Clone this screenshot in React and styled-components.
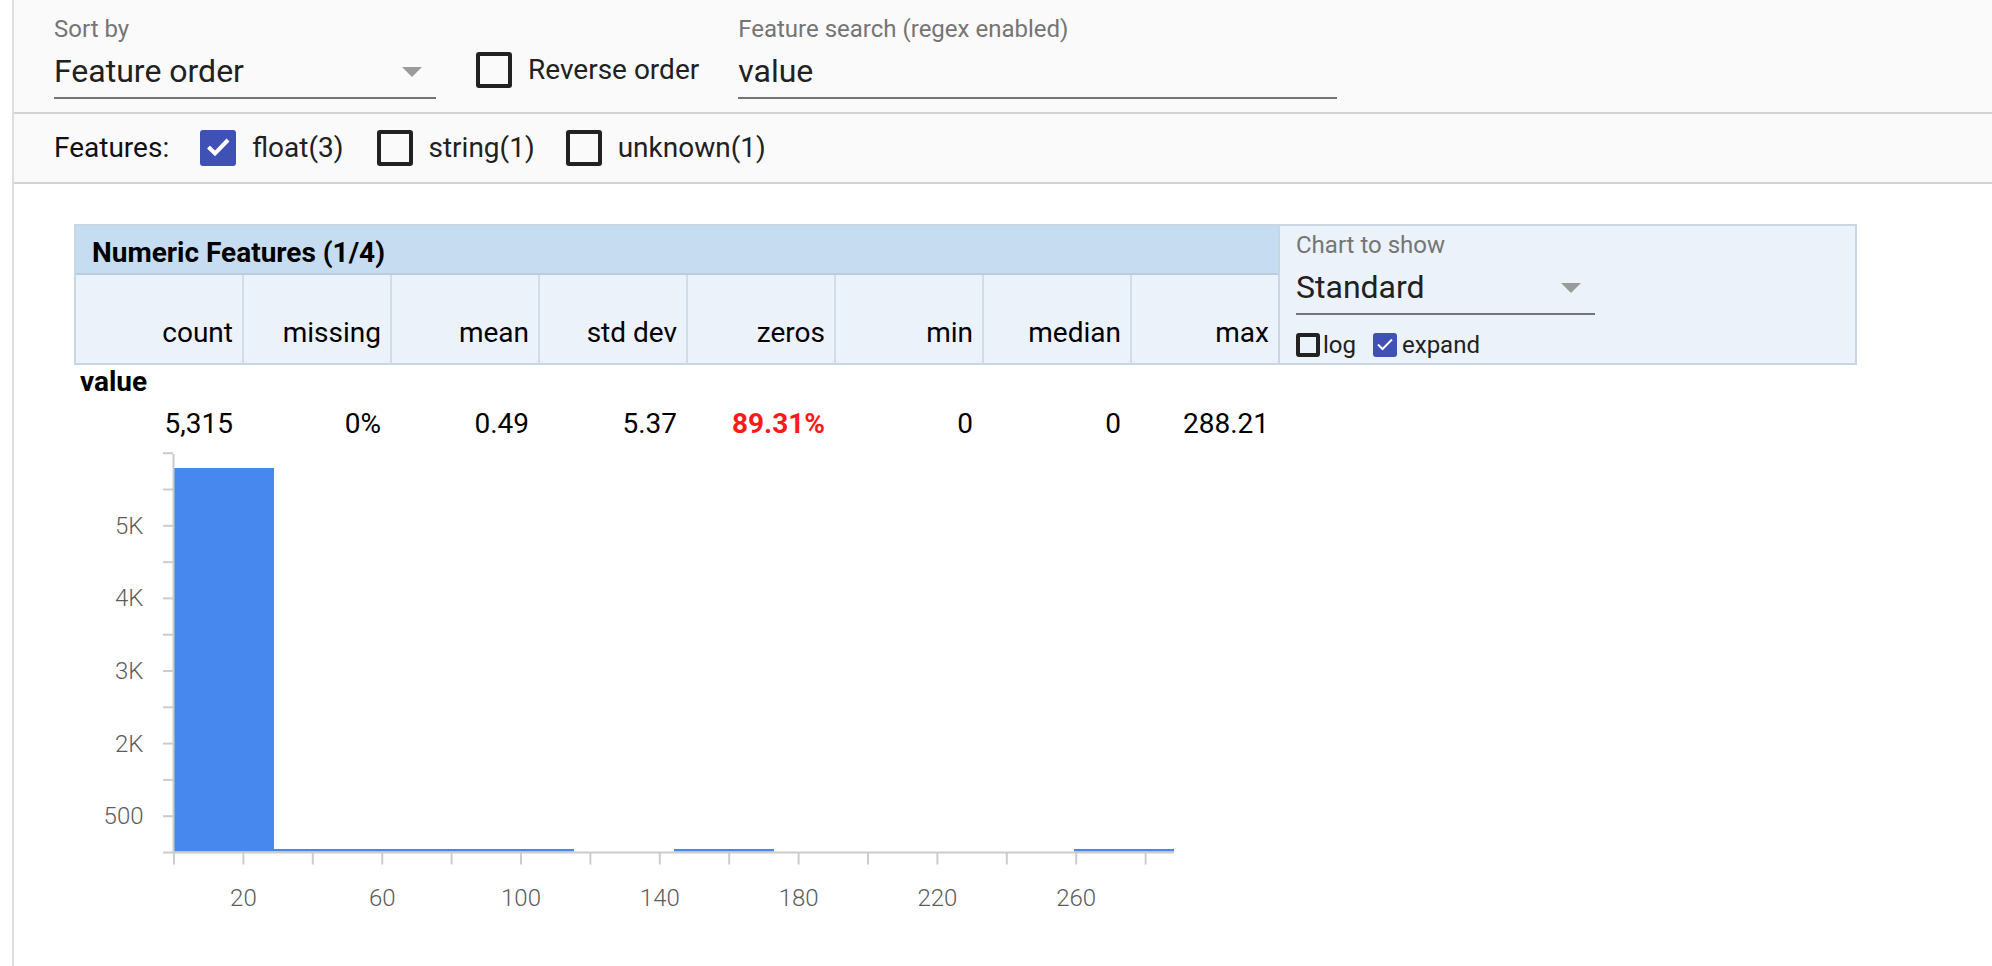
import React from 'react';
import styled, { createGlobalStyle } from 'styled-components';

const GlobalStyle = createGlobalStyle`
  html, body { margin: 0; padding: 0; background: #ffffff; }
  body { font-family: Roboto, "Noto Sans", Arial, sans-serif; color: #212121; }
  *, *::before, *::after { box-sizing: border-box; }
`;

const Page = styled.div`
  margin-left: 12px;
  min-height: 966px;
  border-left: 2px solid #dedede;
`;

const Toolbar = styled.div`
  background: #fafafa;
`;

const ToolbarRow = styled.div`
  display: flex;
  align-items: ${p => p.$align || 'center'};
  height: ${p => p.$height}px;
  padding-left: 40px;
  border-bottom: 2px solid #d2d2d2;
`;

const Field = styled.div`
  flex: none;
  width: ${p => p.$width}px;
  margin-left: ${p => p.$ml || 0}px;
  padding: ${p => p.$top ?? 15}px 0 6px;
  border-bottom: 2px solid #757575;
`;

const FieldLabel = styled.div`
  font-size: 24px;
  line-height: 28px;
  color: #757575;
  white-space: nowrap;
`;

const FieldValue = styled.div`
  display: flex;
  align-items: center;
  justify-content: space-between;
  margin-top: 8px;
  height: 40px;
  font-size: 32px;
  line-height: 40px;
  color: #212121;
  white-space: nowrap;
`;

const DropArrow = styled.svg`
  flex: none;
  width: 20px;
  height: 10px;
  margin-right: 14px;
  margin-top: 2px;
`;

const CheckItem = styled.label`
  flex: none;
  display: flex;
  align-items: center;
  gap: ${p => p.$gap}px;
  margin-left: ${p => p.$ml || 0}px;
  margin-top: ${p => p.$mt || 0}px;
  font-size: ${p => p.$fs}px;
  line-height: ${p => p.$lh}px;
  color: #212121;
  white-space: nowrap;
`;

const Box = styled.span`
  flex: none;
  display: block;
  width: ${p => p.$size}px;
  height: ${p => p.$size}px;
  border-radius: ${p => p.$radius}px;
  border: ${p => (p.$checked ? 'none' : `${p.$border}px solid #222222`)};
  background: ${p => (p.$checked ? '#3f51b5' : 'transparent')};
`;

const BoxMark = styled.svg`
  display: block;
  width: 100%;
  height: 100%;
`;

const RowLabel = styled.span`
  font-size: 28px;
  line-height: 36px;
  color: #111111;
  white-space: nowrap;
`;

const Section = styled.div`
  margin: 40px 0 0 60px;
  width: 1783px;
`;

const StatsTable = styled.div`
  display: grid;
  grid-template-columns: 166px repeat(7, 148px) 577px;
  grid-template-rows: 49px 88px;
  border: 2px solid #c9d6e4;
`;

const TableHeader = styled.div`
  grid-column: 1 / 9;
  grid-row: 1;
  background: #c6dcf0;
  border-bottom: 2px solid #b9cde2;
  padding: 11px 0 0 16px;
  font-size: 28px;
  line-height: 32px;
  font-weight: 700;
  color: #000000;
  white-space: nowrap;
`;

const ColHead = styled.div`
  grid-row: 2;
  display: flex;
  justify-content: flex-end;
  align-items: flex-end;
  padding: 0 9px 14px 0;
  background: #ebf2fa;
  border-left: ${p => (p.$first ? 'none' : '2px solid #d2dce7')};
  font-size: 28px;
  line-height: 32px;
  color: #000000;
  white-space: nowrap;
`;

const ChartPanel = styled.div`
  grid-column: 9;
  grid-row: 1 / 3;
  background: #ebf2fa;
  border-left: 2px solid #c9d6e4;
  padding: 5px 0 0 16px;
`;

const ToggleRow = styled.div`
  display: flex;
  align-items: center;
  margin-top: 16px;
`;

const FeatureName = styled.div`
  margin: 1px 0 0 6px;
  font-size: 28px;
  line-height: 32px;
  font-weight: 700;
  color: #000000;
`;

const ValuesRow = styled.div`
  display: grid;
  grid-template-columns: 166px repeat(7, 148px);
  margin: 10px 0 0 2px;
`;

const ValueCell = styled.div`
  text-align: right;
  padding-right: 9px;
  font-size: 28px;
  line-height: 32px;
  font-weight: ${p => (p.$alert ? 700 : 400)};
  color: ${p => (p.$alert ? '#ff1a1a' : '#000000')};
  white-space: nowrap;
`;

const Chart = styled.svg`
  display: block;
  width: 1120px;
  height: 500px;
`;

const AxisText = styled.text`
  font-family: Roboto, "Noto Sans", Arial, sans-serif;
  font-weight: 300;
  font-size: 24px;
  fill: #5c5c5c;
`;

function Checkbox({ checked, size, border, radius, small }) {
  return (
    <Box $checked={checked} $size={size} $border={border} $radius={radius}>
      {checked && (
        <BoxMark viewBox={small ? '0 0 24 24' : '0 0 36 36'}>
          {small ? (
            <polyline points="5,11.5 9.5,16 19,6.5" fill="none" stroke="#ffffff" strokeWidth="2" />
          ) : (
            <polyline points="8.5,17 15,23.5 28,10" fill="none" stroke="#ffffff" strokeWidth="4" />
          )}
        </BoxMark>
      )}
    </Box>
  );
}

function Arrow() {
  return (
    <DropArrow viewBox="0 0 20 10">
      <polygon points="0,0 20,0 10,10" fill="#9b9b9b" />
    </DropArrow>
  );
}

const columns = ['count', 'missing', 'mean', 'std dev', 'zeros', 'min', 'median', 'max'];
const values = [
  { v: '5,315' },
  { v: '0%' },
  { v: '0.49' },
  { v: '5.37' },
  { v: '89.31%', alert: true },
  { v: '0' },
  { v: '0' },
  { v: '288.21' },
];

const AXIS_Y = 412.5;
const Y_STEP = 36.3;
const X0 = 100;
const X_STEP = 69.4;
const bars = [
  { i: 0, top: 28 },
  { i: 1, top: 409 },
  { i: 2, top: 409 },
  { i: 3, top: 409 },
  { i: 5, top: 409 },
  { i: 9, top: 409 },
];
const yLabels = { 1: '500', 3: '2K', 5: '3K', 7: '4K', 9: '5K' };

function Histogram() {
  const yTicks = Array.from({ length: 11 }, (_, k) => k + 1);
  const xTicks = Array.from({ length: 15 }, (_, k) => k);
  return (
    <Chart viewBox="0 0 1120 500">
      {bars.map(b => (
        <rect key={b.i} x={X0 + b.i * 100} y={b.top} width={100} height={AXIS_Y - 1 - b.top} fill="#4788ef" />
      ))}
      <line x1={99.5} y1={14} x2={99.5} y2={AXIS_Y + 1} stroke="#cccccc" strokeWidth="2" />
      <line x1={89} y1={AXIS_Y} x2={1100} y2={AXIS_Y} stroke="#cccccc" strokeWidth="2" />
      {yTicks.map(k => (
        <line key={k} x1={89} y1={AXIS_Y - k * Y_STEP} x2={99} y2={AXIS_Y - k * Y_STEP} stroke="#cccccc" strokeWidth="2" />
      ))}
      {xTicks.map(k => (
        <line key={k} x1={X0 + k * X_STEP} y1={AXIS_Y} x2={X0 + k * X_STEP} y2={AXIS_Y + 12} stroke="#cccccc" strokeWidth="2" />
      ))}
      {Object.entries(yLabels).map(([k, t]) => (
        <AxisText key={k} x={69.5} y={AXIS_Y - Number(k) * Y_STEP} textAnchor="end" dominantBaseline="central">
          {t}
        </AxisText>
      ))}
      {[1, 3, 5, 7, 9, 11, 13].map(k => (
        <AxisText key={k} x={X0 + k * X_STEP} y={458} textAnchor="middle" dominantBaseline="central">
          {k * 20}
        </AxisText>
      ))}
    </Chart>
  );
}

export default function App() {
  return (
    <>
      <GlobalStyle />
      <Page>
        <Toolbar>
          <ToolbarRow $height={114} $align="flex-start">
            <Field $width={382}>
              <FieldLabel>Sort by</FieldLabel>
              <FieldValue>
                <span>Feature order</span>
                <Arrow />
              </FieldValue>
            </Field>
            <CheckItem $ml={40} $mt={52} $gap={16} $fs={28} $lh={36}>
              <Checkbox size={36} border={4} radius={3} />
              <span>Reverse order</span>
            </CheckItem>
            <Field $width={599} $ml={39}>
              <FieldLabel>Feature search (regex enabled)</FieldLabel>
              <FieldValue>
                <span>value</span>
              </FieldValue>
            </Field>
          </ToolbarRow>
          <ToolbarRow $height={70}>
            <RowLabel>Features:</RowLabel>
            <CheckItem $ml={31} $gap={16} $fs={28} $lh={36}>
              <Checkbox checked size={36} border={4} radius={3} />
              <span>float(3)</span>
            </CheckItem>
            <CheckItem $ml={33} $gap={16} $fs={28} $lh={36}>
              <Checkbox size={36} border={4} radius={3} />
              <span>string(1)</span>
            </CheckItem>
            <CheckItem $ml={31} $gap={16} $fs={28} $lh={36}>
              <Checkbox size={36} border={4} radius={3} />
              <span>unknown(1)</span>
            </CheckItem>
          </ToolbarRow>
        </Toolbar>
        <Section>
          <StatsTable>
            <TableHeader>Numeric Features (1/4)</TableHeader>
            {columns.map((c, i) => (
              <ColHead key={c} $first={i === 0}>{c}</ColHead>
            ))}
            <ChartPanel>
              <Field $width={299} $top={0}>
                <FieldLabel>Chart to show</FieldLabel>
                <FieldValue>
                  <span>Standard</span>
                  <Arrow />
                </FieldValue>
              </Field>
              <ToggleRow>
                <CheckItem $gap={3} $fs={24} $lh={28}>
                  <Checkbox size={24} border={4} radius={3} small />
                  <span>log</span>
                </CheckItem>
                <CheckItem $ml={17} $gap={5} $fs={24} $lh={28}>
                  <Checkbox checked size={24} border={4} radius={3} small />
                  <span>expand</span>
                </CheckItem>
              </ToggleRow>
            </ChartPanel>
          </StatsTable>
          <FeatureName>value</FeatureName>
          <ValuesRow>
            {values.map((v, i) => (
              <ValueCell key={i} $alert={v.alert}>{v.v}</ValueCell>
            ))}
          </ValuesRow>
          <Histogram />
        </Section>
      </Page>
    </>
  );
}
